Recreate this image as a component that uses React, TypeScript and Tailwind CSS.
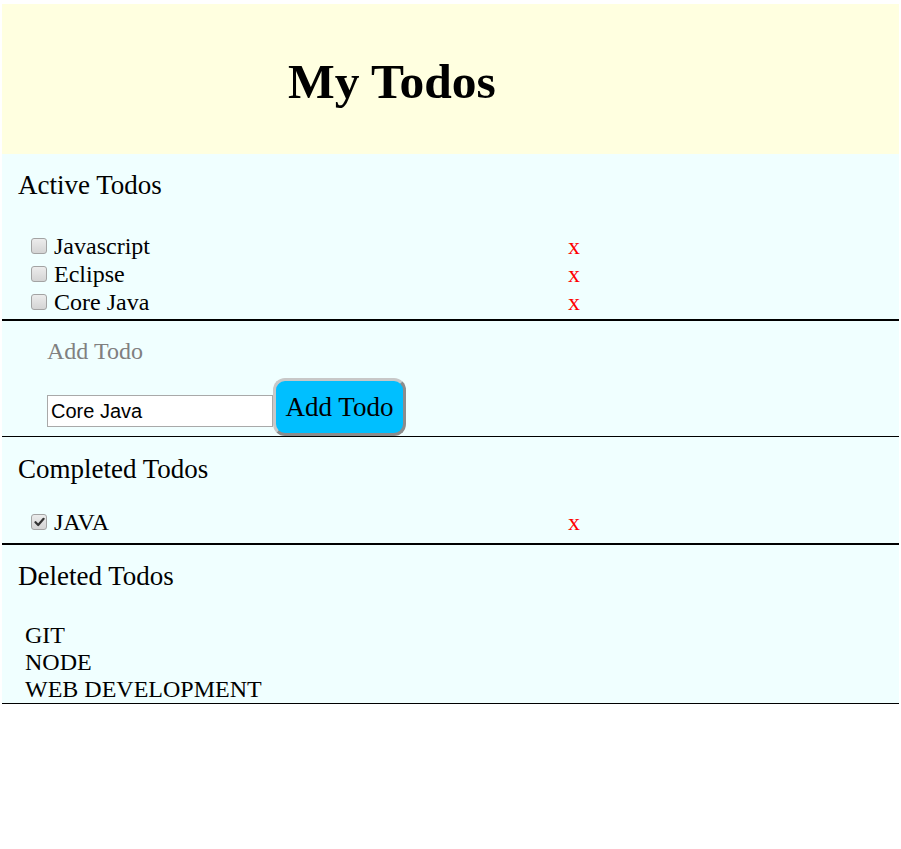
const active = ["Javascript", "Eclipse", "Core Java"];
const completed = ["JAVA"];
const deleted = ["GIT", "NODE", "WEB DEVELOPMENT"];

function Box({ checked }: { checked?: boolean }) {
  return (
    <span className="flex h-[16px] w-[16px] items-center justify-center rounded-[3px] border border-[#a3a3a3] bg-gradient-to-b from-[#ececec] to-[#d4d4d4]">
      {checked && (
        <svg width="11" height="10" viewBox="0 0 11 10">
          <path d="M1.5 5.2 L4.2 8 L9.6 1.8" fill="none" stroke="#333" strokeWidth="2.2" strokeLinecap="round" strokeLinejoin="round" />
        </svg>
      )}
    </span>
  );
}

function TodoRow({ text, checked }: { text: string; checked?: boolean }) {
  return (
    <li className="flex h-[28px] items-center pl-[29px] text-[24px] leading-[28px]">
      <div className="flex w-[537px] items-center gap-[7px]">
        <Box checked={checked} />
        <span className="text-black">{text}</span>
      </div>
      <span className="text-[#ff0000]">x</span>
    </li>
  );
}

export default function App() {
  return (
    <div className="mx-[2px] mt-[4px] font-['Liberation_Serif',serif] text-black">
      {/* Header */}
      <header className="h-[150px] bg-[#ffffe0] pl-[286px] pt-[53px]">
        <h1 className="text-[49.5px] font-bold leading-none">My Todos</h1>
      </header>

      {/* Active */}
      <section className="border-b-2 border-black bg-[#f0ffff] pb-[3px] pt-[18px]">
        <h2 className="pl-[16px] text-[27px] leading-none">Active Todos</h2>
        <ul className="mt-[33px]">
          {active.map((t) => (
            <TodoRow key={t} text={t} />
          ))}
        </ul>
      </section>

      {/* Add */}
      <section className="border-b border-black bg-[#f0ffff] pl-[45px] pt-[18px]">
        <div className="text-[24px] leading-none text-[#808080]">Add Todo</div>
        <div className="mt-[15px] flex items-end">
          <input
            defaultValue="Core Java"
            className="mb-[9px] h-[32px] w-[226px] border border-[#a9a9a9] bg-white px-[3px] font-['Liberation_Sans',sans-serif] text-[20px] text-black outline-none"
          />
          <button className="h-[58px] w-[133px] rounded-[12px] border-[3px] border-b-[#8c8c8c] border-l-[#c8c8c8] border-r-[#8c8c8c] border-t-[#c8c8c8] bg-[#00bfff] text-[27px] leading-none text-black">
            Add Todo
          </button>
        </div>
      </section>

      {/* Completed */}
      <section className="border-b-2 border-black bg-[#f0ffff] pb-[7px] pt-[19px]">
        <h2 className="pl-[16px] text-[27px] leading-none">Completed Todos</h2>
        <ul className="mt-[25px]">
          {completed.map((t) => (
            <TodoRow key={t} text={t} checked />
          ))}
        </ul>
      </section>

      {/* Deleted */}
      <section className="border-b border-black bg-[#f0ffff] pt-[18px]">
        <h2 className="pl-[16px] text-[27px] leading-none">Deleted Todos</h2>
        <ul className="mt-[32px] pl-[23px] text-[24px] leading-[27px]">
          {deleted.map((t) => (
            <li key={t}>{t}</li>
          ))}
        </ul>
      </section>
    </div>
  );
}
